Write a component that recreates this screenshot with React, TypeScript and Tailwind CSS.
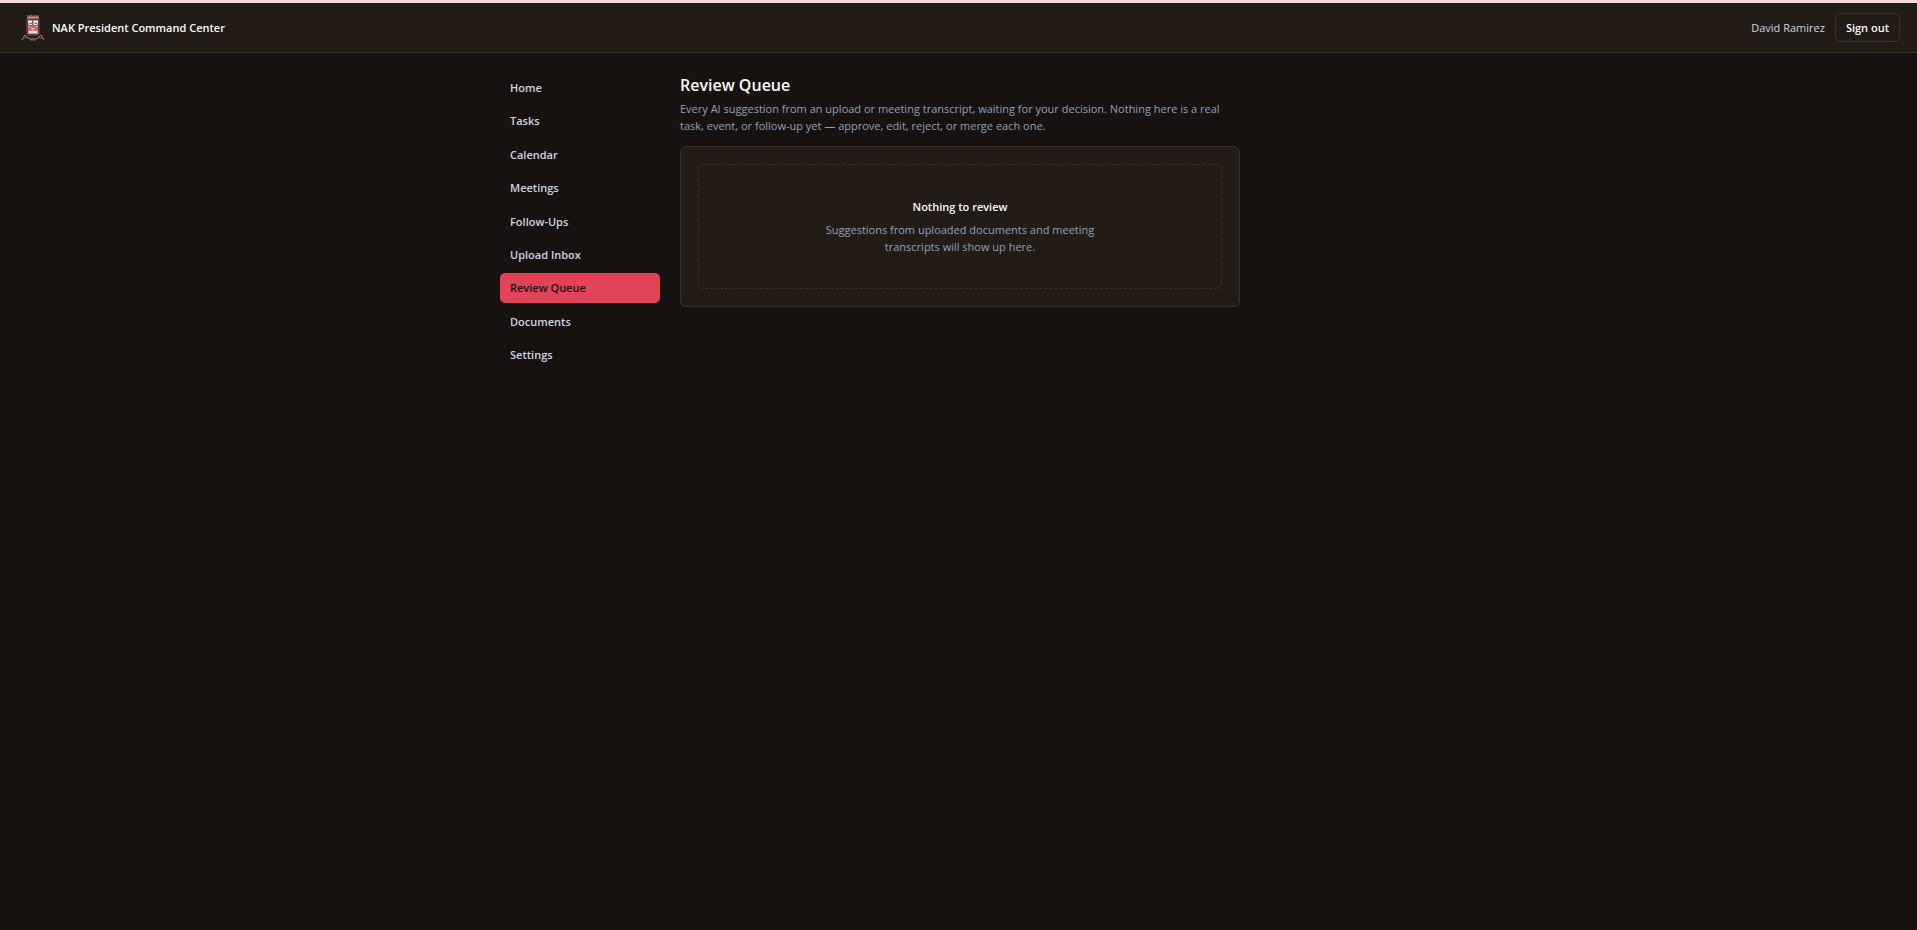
import { useState } from 'react'

const NAV_ITEMS = [
  'Home',
  'Tasks',
  'Calendar',
  'Meetings',
  'Follow-Ups',
  'Upload Inbox',
  'Review Queue',
  'Documents',
  'Settings',
]

function Crest() {
  return (
    <svg viewBox="0 0 27 27" className="size-[27px]" aria-hidden="true">
      <path d="M10 1h12v4h1v15l-2 2H11l-2-2V5h1z" fill="#5b3548" />
      <path d="M10 1h12v4H10z" fill="#8d6b50" />
      <path d="M11 1h2v1h-2zM15 1h2v1h-2zM19 1h2v1h-2z" fill="#4a3430" />
      <path d="M11 3h10v1H11z" fill="#b99a76" />
      <path d="M11 6h10v14H11z" fill="#b8a79c" />
      <path d="M11 7h4v2h-4zM17 7h4v2h-4zM12 10h3v1h-3zM17 10h3v1h-3z" fill="#e3dcd5" />
      <path d="M13 9h2v1h-2zM18 9h2v1h-2zM15 6h1v5h-1z" fill="#7d6962" />
      <path d="M11 11h10v1H11z" fill="#8a6a60" />
      <path d="M11 16v-2l2-1 3-1 3 1 2 1v2l-2 1-3-2-3 2z" fill="#df5558" />
      <path d="M14 14h4v1h-4zM12 17h8v2h-8z" fill="#e6dad0" />
      <path d="M5 26v-1l2-1v-2l1-1 2 2 3 2h6l3-2 2-2 1 1v2l2 1v1" fill="none" stroke="#a98d68" />
      <path d="M8 24h2M22 24h2M13 26h6" fill="none" stroke="#7d654b" />
    </svg>
  )
}

function Header() {
  return (
    <header className="flex items-center justify-between border-t-3 border-b border-t-[#f0ddd8] border-b-[#3a2e24] bg-[#231b16] px-[17px] py-[10px]">
      <div className="flex items-center gap-2">
        <Crest />
        <span className="text-[11px] leading-[17px] font-semibold text-slate-50">
          NAK President Command Center
        </span>
      </div>
      <div className="flex items-center gap-[10px]">
        <span className="text-[11px] leading-[17px] text-slate-300">David Ramirez</span>
        <button
          type="button"
          className="rounded-[5px] border border-[#3a2f29] px-[10px] py-[5px] text-[11px] leading-[17px] font-semibold text-slate-50"
        >
          Sign out
        </button>
      </div>
    </header>
  )
}

function Sidebar({ active, onSelect }: { active: string; onSelect: (item: string) => void }) {
  return (
    <nav className="flex min-h-[297px] w-40 shrink-0 flex-col justify-between self-start">
      {NAV_ITEMS.map((item) => (
        <a
          key={item}
          href="#"
          onClick={() => onSelect(item)}
          className={
            item === active
              ? 'rounded-[5px] bg-[#e24359] px-[10px] py-[7px] text-[11px] leading-4 font-semibold text-[#17120f]'
              : 'rounded-[5px] px-[10px] py-[7px] text-[11px] leading-4 font-semibold text-slate-300'
          }
        >
          {item}
        </a>
      ))}
    </nav>
  )
}

function ReviewQueue() {
  return (
    <main className="max-w-[560px] flex-1">
      <h1 className="text-base leading-6 font-semibold text-slate-50">Review Queue</h1>
      <p className="mt-[3px] text-[11px] leading-[17px] text-slate-400">
        Every AI suggestion from an upload or meeting transcript, waiting for your decision. Nothing
        here is a real task, event, or follow-up yet — approve, edit, reject, or merge each one.
      </p>

      <section className="mt-[12px] rounded-[6px] border border-[#3a2f29] bg-[#231b16] p-[17px]">
        <div className="flex flex-col items-center rounded-[5px] border border-dashed border-[#3a2f29] px-5 py-[33px] text-center">
          <h2 className="text-[11px] leading-[17px] font-semibold text-slate-50">Nothing to review</h2>
          <p className="mt-[6px] max-w-[320px] text-[11px] leading-[17px] text-slate-400">
            Suggestions from uploaded documents and meeting transcripts will show up here.
          </p>
        </div>
      </section>
    </main>
  )
}

export default function App() {
  const [active, setActive] = useState('Review Queue')

  return (
    <div className="min-h-dvh bg-[#17120f] font-['Segoe_UI','Open_Sans',sans-serif]">
      <Header />
      <div className="mx-auto flex max-w-[957px] gap-5 px-5 py-5">
        <Sidebar active={active} onSelect={setActive} />
        <ReviewQueue />
      </div>
    </div>
  )
}
